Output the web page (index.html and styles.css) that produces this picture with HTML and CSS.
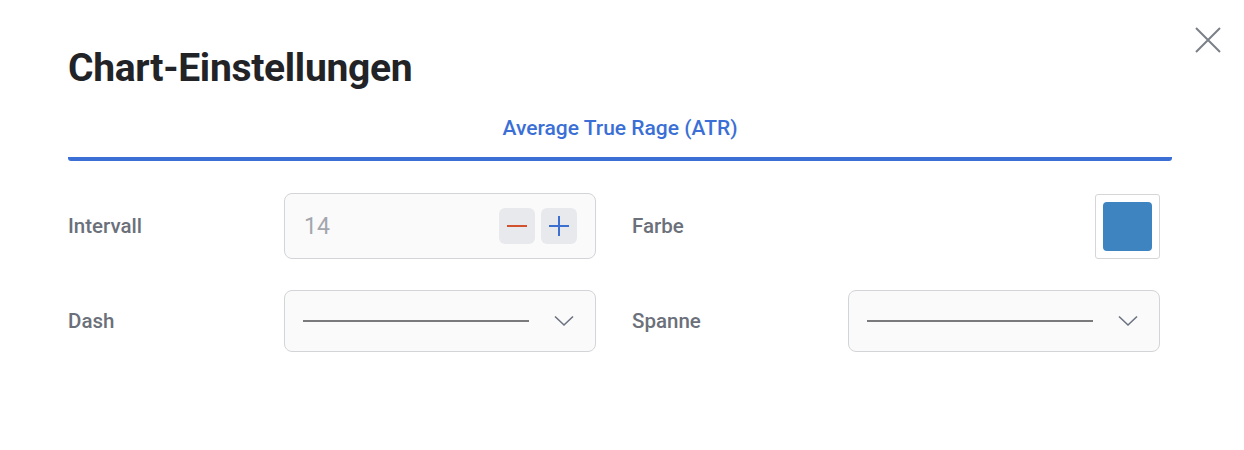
FILE: index.html
```html
<!DOCTYPE html>
<html>
    <head>
        <title>Chart-Einstellungen</title>
        <link rel="stylesheet" href="styles.css">
    </head>
    <body>
        <div class="modal">
            <button class="close" aria-label="Schließen">
                <svg width="28" height="28" viewBox="0 0 28 28"><path d="M2 2L26 26M26 2L2 26" stroke="#7b7f87" stroke-width="2" fill="none"/></svg>
            </button>
            <h1 class="title">Chart-Einstellungen</h1>
            <div class="tabs">
                <div class="tab active">Average True Rage (ATR)</div>
            </div>
            <div class="form">
                <div class="field">
                    <label class="label">Intervall</label>
                    <div class="box number">
                        <span class="value">14</span>
                        <div class="steps">
                            <button class="step minus"><svg width="20" height="20" viewBox="0 0 20 20"><path d="M0 10H20" stroke="#d2512e" stroke-width="2"/></svg></button>
                            <button class="step plus"><svg width="20" height="20" viewBox="0 0 20 20"><path d="M0 10H20M10 0V20" stroke="#3d6fd0" stroke-width="2"/></svg></button>
                        </div>
                    </div>
                </div>
                <div class="field">
                    <label class="label">Farbe</label>
                    <div class="swatch"><span class="swatch-color"></span></div>
                </div>
                <div class="field">
                    <label class="label">Dash</label>
                    <div class="box select">
                        <span class="line"></span>
                        <svg class="chevron" width="20" height="12" viewBox="0 0 20 12"><path d="M1 1.5L10 10L19 1.5" stroke="#6b7280" stroke-width="1.6" fill="none"/></svg>
                    </div>
                </div>
                <div class="field">
                    <label class="label">Spanne</label>
                    <div class="box select">
                        <span class="line"></span>
                        <svg class="chevron" width="20" height="12" viewBox="0 0 20 12"><path d="M1 1.5L10 10L19 1.5" stroke="#6b7280" stroke-width="1.6" fill="none"/></svg>
                    </div>
                </div>
            </div>
        </div>
    </body>
</html>
```

FILE: styles.css
```css
body{
    margin: 0;
    padding: 0;
    background: #fff;
    font-family: Roboto, "Noto Sans", sans-serif;
}
.modal{
    position: relative;
    width: 1104px;
    padding: 46px 72px 0 68px;
}
.close{
    position: absolute;
    top: 26px;
    right: 22px;
    border: 0;
    background: none;
    padding: 0;
    cursor: pointer;
}
.title{
    margin: 0;
    font-size: 39px;
    font-weight: 700;
    color: #212327;
    letter-spacing: -0.3px;
    line-height: 44px;
}
.tabs{
    display: flex;
    justify-content: center;
    margin-top: 25px;
}
.tab{
    flex: 1;
    text-align: center;
    font-size: 21px;
    font-weight: 500;
    color: #3b6fd6;
    padding-bottom: 16px;
    line-height: 26px;
}
.tab.active{
    border-bottom: 4px solid #3b6fd6;
    border-radius: 3px;
}
.form{
    display: grid;
    grid-template-columns: 528px 528px;
    column-gap: 36px;
    row-gap: 31px;
    margin-top: 32px;
}
.field{
    display: flex;
    align-items: center;
}
.label{
    width: 216px;
    font-size: 20.5px;
    font-weight: 500;
    color: #6b707a;
}
.box{
    box-sizing: border-box;
    width: 312px;
    display: flex;
    align-items: center;
    border: 1px solid #d3d4d8;
    border-radius: 8px;
    background: #fafafa;
}
.number{
    height: 66px;
    padding: 0 18px 0 19px;
    justify-content: space-between;
}
.value{
    font-size: 23px;
    color: #a3a6ad;
}
.steps{
    display: flex;
    gap: 6px;
}
.step{
    width: 36px;
    height: 36px;
    border: 0;
    border-radius: 6px;
    background: #e8e9ec;
    padding: 0;
    display: flex;
    align-items: center;
    justify-content: center;
}
.swatch{
    box-sizing: border-box;
    margin-left: auto;
    width: 65px;
    height: 65px;
    border: 1px solid #d6d6d9;
    border-radius: 3px;
    display: flex;
    align-items: center;
    justify-content: center;
}
.swatch-color{
    width: 49px;
    height: 49px;
    border-radius: 4px;
    background: #3d84c0;
}
.select{
    height: 62px;
    padding: 0 21px 0 18px;
}
.field:nth-child(4) .select{
    margin-left: auto;
}
.line{
    width: 226px;
    height: 2px;
    background: #7a7a7c;
}
.chevron{
    margin-left: auto;
}
```
